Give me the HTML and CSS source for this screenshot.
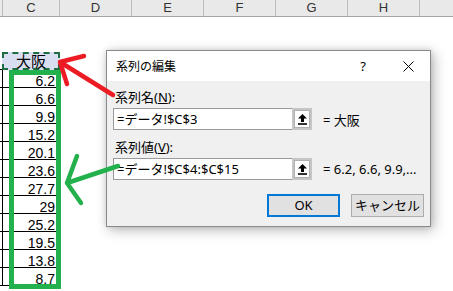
FILE: index.html
```html
<!DOCTYPE html>
<html lang="ja">

<head>
    <meta charset="UTF-8" />
    <title>系列の編集</title>
    <link rel="stylesheet" href="styles.css">
</head>

<body>
    <div class="sheet">
        <div class="colhead">
            <div class="col col-c">C</div>
            <div class="col">D</div>
            <div class="col">E</div>
            <div class="col">F</div>
            <div class="col">G</div>
            <div class="col">H</div>
            <div class="col col-rest"></div>
        </div>

        <div class="grid">
            <div class="row">
                <div class="stub"></div>
                <div class="cell cell-title">大阪</div>
            </div>
            <div class="row"><div class="stub"></div><div class="cell">6.2</div></div>
            <div class="row"><div class="stub"></div><div class="cell">6.6</div></div>
            <div class="row"><div class="stub"></div><div class="cell">9.9</div></div>
            <div class="row"><div class="stub"></div><div class="cell">15.2</div></div>
            <div class="row"><div class="stub"></div><div class="cell">20.1</div></div>
            <div class="row"><div class="stub"></div><div class="cell">23.6</div></div>
            <div class="row"><div class="stub"></div><div class="cell">27.7</div></div>
            <div class="row"><div class="stub"></div><div class="cell">29</div></div>
            <div class="row"><div class="stub"></div><div class="cell">25.2</div></div>
            <div class="row"><div class="stub"></div><div class="cell">19.5</div></div>
            <div class="row"><div class="stub"></div><div class="cell">13.8</div></div>
            <div class="row"><div class="stub"></div><div class="cell">8.7</div></div>
        </div>

        <!-- 値の範囲を囲む枠 -->
        <div class="pick-frame"></div>

        <div class="dialog">
            <div class="dlg-title">
                <span class="dlg-caption">系列の編集</span>
                <span class="dlg-help">?</span>
                <span class="dlg-close">
                    <svg width="11" height="11" viewBox="0 0 11 11">
                        <path d="M0.5 0.5 L10.5 10.5 M10.5 0.5 L0.5 10.5" stroke="#000" stroke-width="1" fill="none" />
                    </svg>
                </span>
            </div>
            <div class="dlg-body">
                <div class="field-label">系列名(<u>N</u>):</div>
                <div class="field-row">
                    <div class="field-input">=データ!$C$3</div>
                    <div class="ref-btn">
                        <svg width="9" height="11" viewBox="0 0 9 11">
                            <path d="M4.5 0 L9 4.5 H6 V8 H3 V4.5 H0 Z" fill="#000" />
                            <rect x="0" y="9.2" width="9" height="1.6" fill="#000" />
                        </svg>
                    </div>
                    <div class="field-value">= 大阪</div>
                </div>
                <div class="field-label label-second">系列値(<u>V</u>):</div>
                <div class="field-row">
                    <div class="field-input">=データ!$C$4:$C$15</div>
                    <div class="ref-btn">
                        <svg width="9" height="11" viewBox="0 0 9 11">
                            <path d="M4.5 0 L9 4.5 H6 V8 H3 V4.5 H0 Z" fill="#000" />
                            <rect x="0" y="9.2" width="9" height="1.6" fill="#000" />
                        </svg>
                    </div>
                    <div class="field-value">= 6.2, 6.6, 9.9,...</div>
                </div>
                <div class="dlg-buttons">
                    <div class="btn btn-ok">OK</div>
                    <div class="btn">キャンセル</div>
                </div>
            </div>
        </div>

        <!-- 手書きの矢印 -->
        <svg class="marks" width="453" height="291" viewBox="0 0 453 291">
            <path d="M113 95 L60 62 M84 56 L60 62 L67 84" stroke="#ed1c24" stroke-width="4.5" stroke-linecap="round" stroke-linejoin="round" fill="none" />
            <path d="M118 166 L67 183 M77 156 L67 183 L81 203" stroke="#22b14c" stroke-width="4.5" stroke-linecap="round" stroke-linejoin="round" fill="none" />
        </svg>
    </div>
</body>

</html>
```

FILE: styles.css
```css
* {
    margin: 0;
    padding: 0;
    box-sizing: border-box;
}

body {
    width: 453px;
    height: 291px;
    overflow: hidden;
    background: #fff;
}

.sheet {
    position: relative;
    width: 453px;
    height: 291px;
    font-family: "Liberation Sans", "Noto Sans CJK JP", sans-serif;
}

/* 列見出し */
.colhead {
    display: flex;
    height: 17px;
    padding-left: 2px;
    background: #e9e9e9;
    border-bottom: 1px solid #a3a3a3;
}

.col {
    flex: none;
    width: 72px;
    border-left: 1px solid #bdbdbd;
    font-size: 13px;
    line-height: 16px;
    text-align: center;
    color: #333;
}

.col-c {
    width: 57px;
}

.col-rest {
    flex: 1;
}

/* セル */
.grid {
    margin-top: 35px;
}

.row {
    display: flex;
    height: 18px;
}

.stub {
    width: 2px;
    border-bottom: 1px solid #000;
}

.cell {
    width: 57px;
    height: 18px;
    border-left: 1px solid #000;
    border-bottom: 1px solid #000;
    padding: 3px 4px 0 0;
    font-size: 14px;
    line-height: 17px;
    text-align: right;
    color: #000;
}

.cell-title {
    width: 58px;
    padding: 0;
    border: 2px dashed #1f6e43;
    background: #d9dff0;
    font-family: "Noto Sans CJK JP", sans-serif;
    font-size: 15px;
    line-height: 14px;
    text-align: center;
}

.pick-frame {
    position: absolute;
    left: 9px;
    top: 70px;
    width: 52px;
    height: 219px;
    border: 5px solid #22b14c;
}

/* ダイアログ */
.dialog {
    position: absolute;
    left: 106px;
    top: 50px;
    width: 325px;
    height: 177px;
    border: 1px solid #8a8a8a;
    background: #f0f0f0;
    box-shadow: 3px 3px 12px rgba(0, 0, 0, 0.28), 0 0 5px rgba(0, 0, 0, 0.12);
    font-family: "Noto Sans", "Noto Sans CJK JP", sans-serif;
    font-size: 12px;
    color: #000;
}

.dlg-title {
    display: flex;
    align-items: center;
    height: 30px;
    padding-left: 9px;
    background: #fff;
}

.dlg-help {
    margin-left: auto;
    width: 20px;
    margin-right: 21px;
    text-align: center;
    font-size: 13px;
}

.dlg-close {
    display: flex;
    align-items: center;
    justify-content: center;
    width: 28px;
    margin-right: 8px;
}

.dlg-body {
    padding: 9px 6px 0 6px;
}

.field-label {
    padding-left: 2px;
    font-size: 13px;
    line-height: 14px;
}

.label-second {
    margin-top: 10px;
}

.field-row {
    display: flex;
    align-items: center;
    margin-top: 4px;
}

.field-input {
    width: 179px;
    height: 22px;
    padding-left: 3px;
    border: 1px solid #9a9a9a;
    border-right: none;
    background: #fff;
    font-size: 13px;
    line-height: 20px;
    white-space: nowrap;
}

.ref-btn {
    display: flex;
    align-items: center;
    justify-content: center;
    width: 20px;
    height: 22px;
    border: 2px solid #c6c6c6;
    background: #fff;
    box-shadow: 0 0 0 1px #b0b0b0 inset;
}

.field-value {
    margin-left: 11px;
    font-size: 13px;
    white-space: nowrap;
}

.dlg-buttons {
    display: flex;
    justify-content: flex-end;
    gap: 11px;
    margin-top: 14px;
}

.btn {
    width: 73px;
    height: 23px;
    border: 1px solid #adadad;
    background: #e1e1e1;
    font-size: 13px;
    line-height: 21px;
    text-align: center;
}

.btn-ok {
    border: 2px solid #0078d7;
    line-height: 19px;
}

.marks {
    position: absolute;
    left: 0;
    top: 0;
    pointer-events: none;
}
```
